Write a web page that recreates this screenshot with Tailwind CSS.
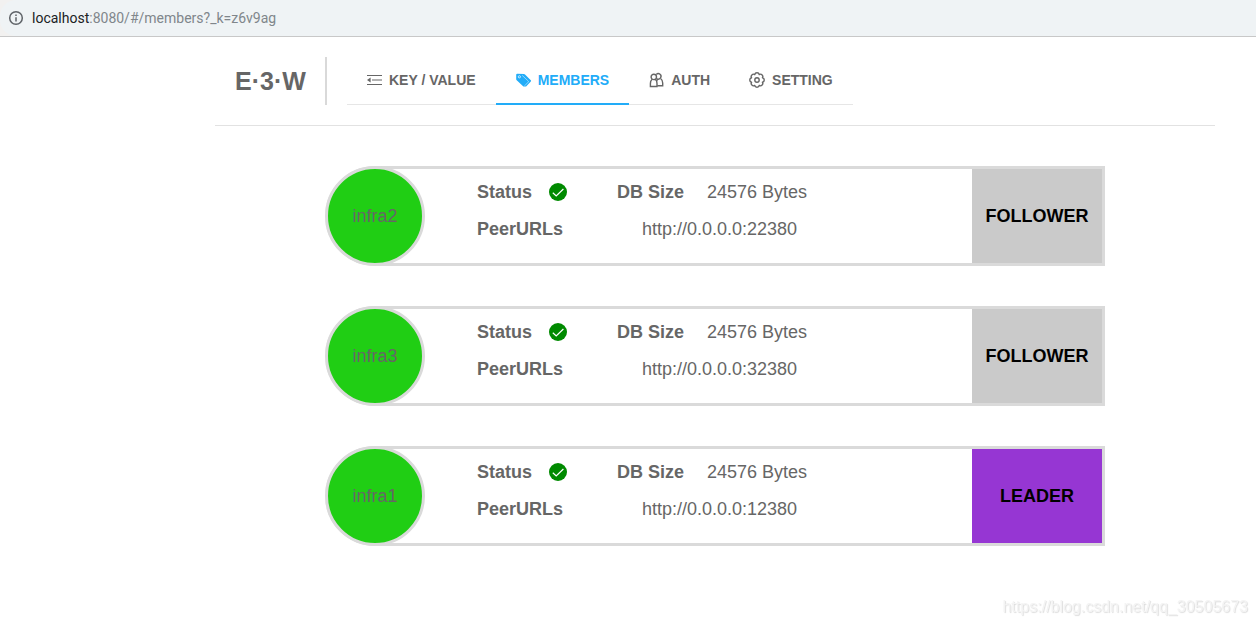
<!DOCTYPE html>
<html lang="en">
<head>
<meta charset="utf-8">
<meta name="viewport" content="width=device-width, initial-scale=1">
<title>E·3·W</title>
<script src="https://cdn.jsdelivr.net/npm/@tailwindcss/browser@4"></script>
</head>
<body class="min-h-screen bg-white font-['Liberation_Sans',Arial,sans-serif] text-[#666]">

<svg class="hidden" aria-hidden="true">
  <symbol id="check" viewBox="0 0 18 18">
    <circle cx="9" cy="9" r="9" fill="#008a00"/>
    <path d="M3.800 9.800 7.200 13 14.400 6" fill="none" stroke="#fff" stroke-width="1.2"/>
  </symbol>
</svg>

<!-- Address bar -->
<div class="h-[37px] border-b border-[#c8c8c8] bg-[#f2f1f0]">
  <div class="flex h-full items-center gap-2 rounded-l-2xl bg-[#eff3f5] pl-2">
    <svg class="size-4" viewBox="0 0 16 16" fill="none" stroke="#5f6368" stroke-width="1.5" aria-hidden="true">
      <circle cx="8" cy="8" r="6.3"/>
      <path d="M8 7.2v4.2M8 4.4v1.6"/>
    </svg>
    <span class="font-[Roboto,sans-serif] text-sm text-[#80868b]"><span class="text-[#202124]">localhost</span>:8080/#/members?_k=z6v9ag</span>
  </div>
</div>

<div class="ml-[215px] max-w-[1000px]">
  <header class="flex border-b border-[#e2e2e2] py-5">
    <h1 class="flex h-12 w-28 items-center border-r-2 border-[#d9d9d9] pt-0.5 pl-5 text-[25px] font-bold">E·3·W</h1>
    <nav class="ml-5 flex h-12 border-b border-[#e6e6e6] text-sm font-bold">
      <a href="#/kv" class="-mb-px flex items-center gap-2 border-b-2 border-transparent px-5">
        <svg class="size-3.5 overflow-visible" viewBox="0 0 14 14" fill="none" stroke="currentColor" stroke-width="1.2" aria-hidden="true">
          <path d="M0 2.500h15M5 7h10M0 11.500h15"/>
          <path d="M0 7 3.600 4.600v4.800z" fill="currentColor" stroke="none"/>
        </svg>KEY / VALUE</a>
      <a href="#/members" aria-current="page" class="-mb-px flex items-center gap-2 border-b-2 border-[#22acf8] px-5 text-[#22acf8]">
        <svg class="size-3.5 overflow-visible" viewBox="0 0 14 14" aria-hidden="true">
          <path d="M1.200.8 8 1q.6 0 1 .4l5.800 5.800q.6.6 0 1.200l-4.200 4.600q-.5.500-1.200.5l-2 0L.7 7.200Q.2 6.800.2 6.200V1.800q0-1 1-1z" fill="currentColor"/>
          <circle cx="3.400" cy="3.800" r="1.100" fill="none" stroke="#fff" stroke-width=".7"/>
          <path d="M6.200 2.400 12.200 8q.5.500.1 1L8.600 12.800" fill="none" stroke="#fff" stroke-width=".5"/>
        </svg>MEMBERS</a>
      <a href="#/auth" class="-mb-px flex items-center gap-2 border-b-2 border-transparent px-5">
        <svg class="size-3.5 overflow-visible" viewBox="0 0 14 14" fill="none" stroke="currentColor" stroke-width="1.4" aria-hidden="true">
          <circle cx="4.800" cy="3.900" r="2.700"/>
          <path d="M3.200 6.200Q1.400 7.600 1.400 10.500v3H8v-3Q8 7.600 6.300 6.200"/>
          <path d="M7.300 1.500a2.700 2.700 0 1 1 .3 4M11.800 5.700q1.900 1.500 1.900 4.200v2.900H8.200M8.800 6.200 7.500 7.700"/>
        </svg>AUTH</a>
      <a href="#/setting" class="-mb-px flex items-center gap-2 border-b-2 border-transparent px-5">
        <svg class="size-3.5 overflow-visible" viewBox="0 0 14 14" fill="none" stroke="currentColor" stroke-width="1.4" stroke-linejoin="round" aria-hidden="true">
          <path d="M12.450 4.740A2.320 2.320 0 0 1 12.450 9.260 2.320 2.320 0 0 1 9.260 12.450 2.320 2.320 0 0 1 4.740 12.450 2.320 2.320 0 0 1 1.550 9.260 2.320 2.320 0 0 1 1.550 4.740 2.320 2.320 0 0 1 4.740 1.550 2.320 2.320 0 0 1 9.260 1.550 2.320 2.320 0 0 1 12.450 4.740z"/>
          <circle cx="7" cy="7" r="2.200"/>
        </svg>SETTING</a>
    </nav>
  </header>

  <main class="flex flex-col gap-10 px-[110px] pt-10 text-lg">
    <article class="flex h-[100px] rounded-l-full border-y-3 border-r-3 border-[#dadada]">
      <h2 class="-my-[3px] flex size-[100px] shrink-0 items-center justify-center rounded-full border-3 border-[#dadada] bg-[#20ce14]">infra2</h2>
      <dl class="flex grow flex-col gap-[9px] pt-[9px] pl-[52px]">
        <div class="flex items-center">
          <dt class="w-[72px] font-bold">Status</dt>
          <dd class="w-[68px]"><svg class="size-[18px]" role="img" aria-label="Healthy"><use href="#check"/></svg></dd>
          <dt class="w-[90px] font-bold">DB Size</dt>
          <dd>24576 Bytes</dd>
        </div>
        <div class="flex items-center">
          <dt class="w-[165px] font-bold">PeerURLs</dt>
          <dd>http://0.0.0.0:22380</dd>
        </div>
      </dl>
      <div class="flex w-[130px] items-center justify-center bg-[#cacaca] font-bold text-black">FOLLOWER</div>
    </article>

    <article class="flex h-[100px] rounded-l-full border-y-3 border-r-3 border-[#dadada]">
      <h2 class="-my-[3px] flex size-[100px] shrink-0 items-center justify-center rounded-full border-3 border-[#dadada] bg-[#20ce14]">infra3</h2>
      <dl class="flex grow flex-col gap-[9px] pt-[9px] pl-[52px]">
        <div class="flex items-center">
          <dt class="w-[72px] font-bold">Status</dt>
          <dd class="w-[68px]"><svg class="size-[18px]" role="img" aria-label="Healthy"><use href="#check"/></svg></dd>
          <dt class="w-[90px] font-bold">DB Size</dt>
          <dd>24576 Bytes</dd>
        </div>
        <div class="flex items-center">
          <dt class="w-[165px] font-bold">PeerURLs</dt>
          <dd>http://0.0.0.0:32380</dd>
        </div>
      </dl>
      <div class="flex w-[130px] items-center justify-center bg-[#cacaca] font-bold text-black">FOLLOWER</div>
    </article>

    <article class="flex h-[100px] rounded-l-full border-y-3 border-r-3 border-[#dadada]">
      <h2 class="-my-[3px] flex size-[100px] shrink-0 items-center justify-center rounded-full border-3 border-[#dadada] bg-[#20ce14]">infra1</h2>
      <dl class="flex grow flex-col gap-[9px] pt-[9px] pl-[52px]">
        <div class="flex items-center">
          <dt class="w-[72px] font-bold">Status</dt>
          <dd class="w-[68px]"><svg class="size-[18px]" role="img" aria-label="Healthy"><use href="#check"/></svg></dd>
          <dt class="w-[90px] font-bold">DB Size</dt>
          <dd>24576 Bytes</dd>
        </div>
        <div class="flex items-center">
          <dt class="w-[165px] font-bold">PeerURLs</dt>
          <dd>http://0.0.0.0:12380</dd>
        </div>
      </dl>
      <div class="flex w-[130px] items-center justify-center bg-[#9636d3] font-bold text-black">LEADER</div>
    </article>
  </main>
</div>

<!-- Watermark over the page corner -->
<div class="fixed right-2 bottom-1.5 text-base text-[#f4f4f4] [text-shadow:1px_1px_1px_#ddd]">https://blog.csdn.net/qq_30505673</div>

</body>
</html>
